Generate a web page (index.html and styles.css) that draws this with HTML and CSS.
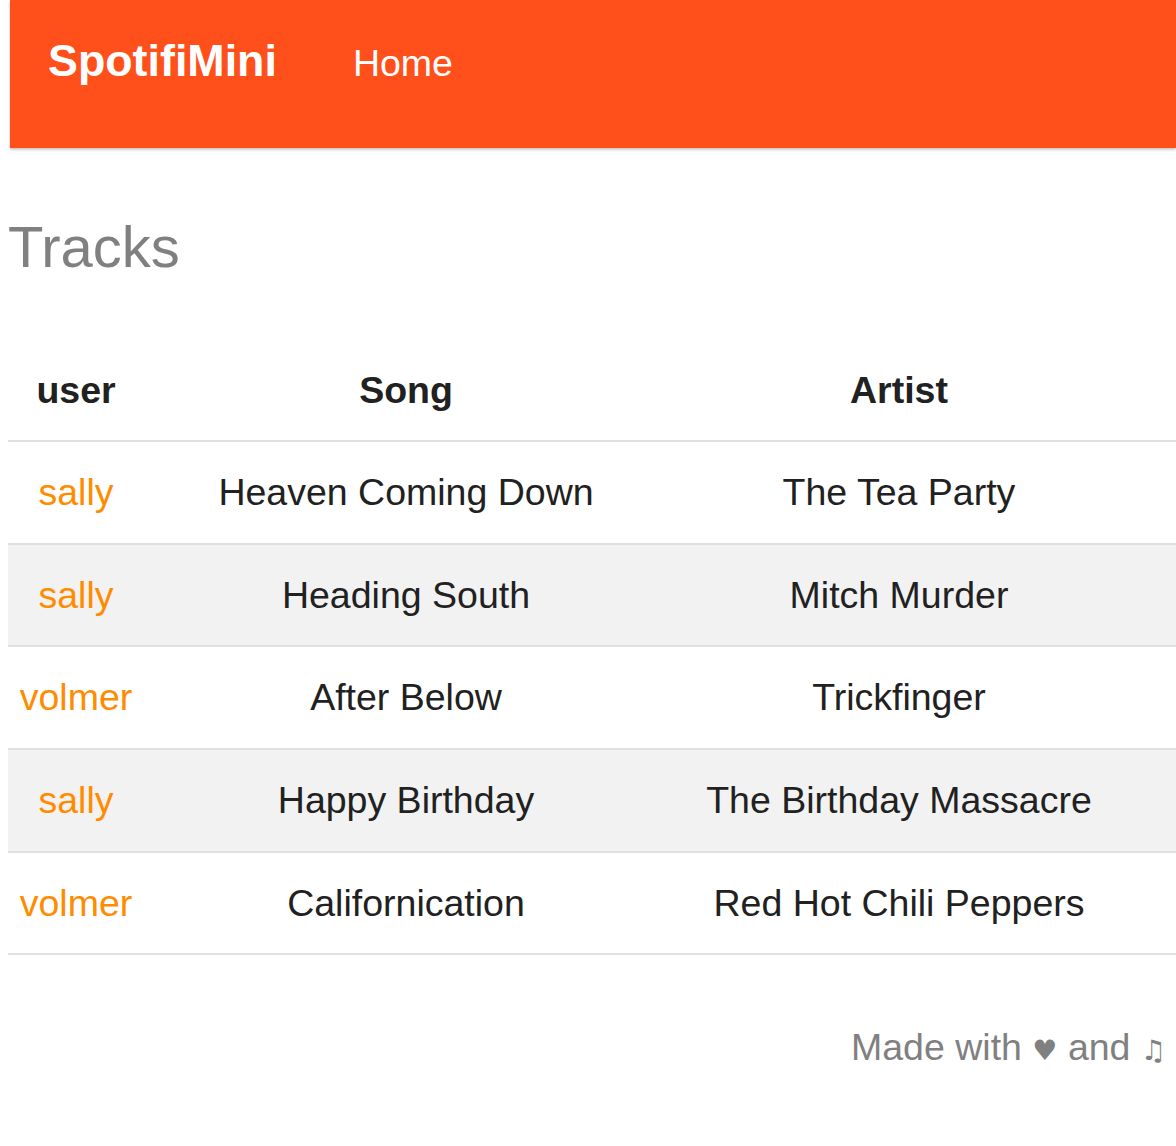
FILE: index.html
```html
<!DOCTYPE html>
<html>
<head>
<meta charset="utf-8">
<link rel="stylesheet" href="styles.css">
</head>
<body>
<nav class="nav">
  <a class="brand" href="#">SpotifiMini</a>
  <a class="nav-link" href="#">Home</a>
</nav>
<main class="content">
  <h1 class="title">Tracks</h1>
  <table class="tracks">
    <thead>
      <tr><th class="c-user">user</th><th class="c-song">Song</th><th class="c-artist">Artist</th></tr>
    </thead>
    <tbody>
      <tr><td class="c-user"><a href="#" class="user">sally</a></td><td class="c-song">Heaven Coming Down</td><td class="c-artist">The Tea Party</td></tr>
      <tr><td class="c-user"><a href="#" class="user">sally</a></td><td class="c-song">Heading South</td><td class="c-artist">Mitch Murder</td></tr>
      <tr><td class="c-user"><a href="#" class="user">volmer</a></td><td class="c-song">After Below</td><td class="c-artist">Trickfinger</td></tr>
      <tr><td class="c-user"><a href="#" class="user">sally</a></td><td class="c-song">Happy Birthday</td><td class="c-artist">The Birthday Massacre</td></tr>
      <tr><td class="c-user"><a href="#" class="user">volmer</a></td><td class="c-song">Californication</td><td class="c-artist">Red Hot Chili Peppers</td></tr>
    </tbody>
  </table>
  <footer class="footer">Made with <span class="glyph">♥</span> and <span class="glyph">♫</span></footer>
</main>
</body>
</html>
```
FILE: styles.css
```css
html, body {
  margin: 0;
  padding: 0;
  background: #fff;
  overflow: hidden;
}
body {
  padding-left: 8px;
  font-family: "Liberation Sans", Arial, sans-serif;
  color: #212121;
}
.nav {
  margin-left: 2px;
  height: 148px;
  background: #ff4f1a;
  display: flex;
  align-items: baseline;
  padding: 35px 0 0 38px;
  box-sizing: border-box;
  box-shadow: 0 2px 3px rgba(0,0,0,0.16), 0 1px 2px rgba(0,0,0,0.1);
}
.brand {
  color: #fff;
  text-decoration: none;
  font-weight: bold;
  font-size: 44.8px;
}
.nav-link {
  color: #fff;
  text-decoration: none;
  font-size: 37.5px;
  margin-left: 76px;
}
.content {
  padding-top: 64px;
}
.title {
  margin: 0;
  font-weight: normal;
  font-size: 58px;
  color: #808080;
  line-height: 1.2;
}
.tracks {
  margin-top: 58px;
  width: 1168px;
  border-collapse: collapse;
  font-size: 37.5px;
  text-align: center;
}
.tracks th, .tracks td {
  padding: 30px 0;
  line-height: 40.6px;
}
.tracks th {
  font-weight: bold;
}
.tracks tr {
  border-bottom: 2px solid #e0e0e0;
}
.tracks tbody tr:nth-child(even) {
  background: #f2f2f2;
}
.c-user { width: 136px; }
.c-song { width: 524px; }
.c-artist { padding-right: 46px !important; }
.user {
  color: #ff8c00;
  text-decoration: none;
}
.footer {
  text-align: right;
  color: #808080;
  font-size: 37.5px;
  padding: 71px 10px 0 0;
}
.glyph {
  font-family: "DejaVu Sans", sans-serif;
  font-size: 28px;
}
```
